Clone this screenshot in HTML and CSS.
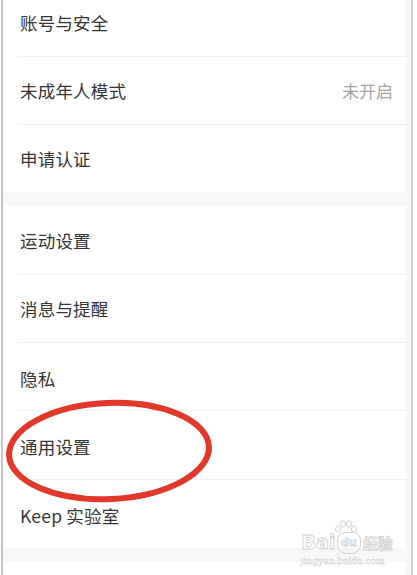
FILE: index.html
```html
<!DOCTYPE html>
<html lang="zh">
<head>
<meta charset="utf-8">
<link rel="stylesheet" href="styles.css">
</head>
<body>
<div class="frame">
  <div class="group">
    <div class="row first"><span class="label">账号与安全</span></div>
    <div class="row"><span class="label">未成年人模式</span><span class="value">未开启</span></div>
    <div class="row last short"><span class="label">申请认证</span></div>
  </div>
  <div class="gap"></div>
  <div class="group">
    <div class="row tall"><span class="label">运动设置</span></div>
    <div class="row"><span class="label">消息与提醒</span></div>
    <div class="row low"><span class="label">隐私</span></div>
    <div class="row tall low"><span class="label">通用设置</span></div>
    <div class="row last low"><span class="label">Keep 实验室</span></div>
  </div>
  <div class="gap bottom"></div>

  <svg class="circle" width="216" height="112" viewBox="0 0 216 112">
    <ellipse cx="106" cy="55" rx="100" ry="48" fill="none" stroke="#e2382a" stroke-width="6" transform="rotate(-2.5 106 55)"/>
  </svg>

  <div class="watermark">
    <svg class="paw" width="24" height="14" viewBox="0 0 24 14">
      <g fill="#fdfdfd" stroke="#d4d4d4" stroke-width="1">
        <ellipse cx="4" cy="9" rx="2.6" ry="3.2"/>
        <ellipse cx="9" cy="4" rx="2.6" ry="3.2"/>
        <ellipse cx="15" cy="4" rx="2.6" ry="3.2"/>
        <ellipse cx="20" cy="9" rx="2.6" ry="3.2"/>
      </g>
    </svg>
    <div class="wm-main"><span class="wm-bai">Bai</span><span class="wm-du">du</span><span class="wm-jy">经验</span></div>
    <div class="wm-url">jingyan.baidu.com</div>
  </div>
</div>
</body>
</html>
```

FILE: styles.css
```css
html, body {
  margin: 0;
  padding: 0;
  background: #ffffff;
}

body {
  width: 417px;
  height: 575px;
  overflow: hidden;
  font-family: "Noto Sans CJK SC", "Noto Sans", sans-serif;
}

.frame {
  position: relative;
  margin-left: 1px;
  width: 408px;
  height: 575px;
  border-left: 2px solid #c6c6c6;
  border-right: 2px solid #d2d2d2;
  box-shadow: inset -5px 0 0 #f6f6f6;
  background: #ffffff;
}

.group {
  display: flex;
  flex-direction: column;
}

.row {
  box-sizing: border-box;
  height: 68px;
  margin-left: 15px;
  padding: 0 18px 0 2px;
  display: flex;
  align-items: center;
  justify-content: space-between;
  border-bottom: 1px solid #f0f0f0;
}

.row.first {
  height: 57px;
  padding-bottom: 12px;
}

.row.tall {
  height: 69px;
}

.row.short {
  height: 67px;
}

.row.low {
  padding-top: 3px;
}

.row.last {
  border-bottom: none;
}

.label {
  font-size: 17.5px;
  color: #353535;
  letter-spacing: 0.2px;
}

.value {
  font-size: 17px;
  color: #a3a3a3;
}

.gap {
  height: 14px;
  background: #f7f7f7;
}

.circle {
  position: absolute;
  left: 0;
  top: 396px;
}

.watermark {
  position: absolute;
  left: 298px;
  top: 519px;
  width: 92px;
}

.paw {
  position: absolute;
  left: 33px;
  top: 1px;
}

.wm-main {
  margin-top: 11px;
  display: flex;
  align-items: center;
  font-family: "DejaVu Sans", sans-serif;
  font-weight: bold;
  line-height: 19px;
  color: #fbfbfb;
  -webkit-text-stroke: 0.8px #d2d2d2;
}

.wm-bai {
  font-size: 20px;
  letter-spacing: -0.5px;
}

.wm-du {
  font-size: 11px;
  margin: 2px 2px 0 2px;
  padding: 0 3px 1px;
  border: 1px solid #d2d2d2;
  border-radius: 8px 8px 9px 9px;
}

.wm-jy {
  font-family: "Noto Sans CJK SC", sans-serif;
  font-size: 15px;
}

.wm-url {
  margin-top: 2px;
  font-family: "DejaVu Serif", serif;
  font-size: 9px;
  line-height: 11px;
  color: #f8f8f8;
  -webkit-text-stroke: 0.4px #d2d2d2;
}
```
